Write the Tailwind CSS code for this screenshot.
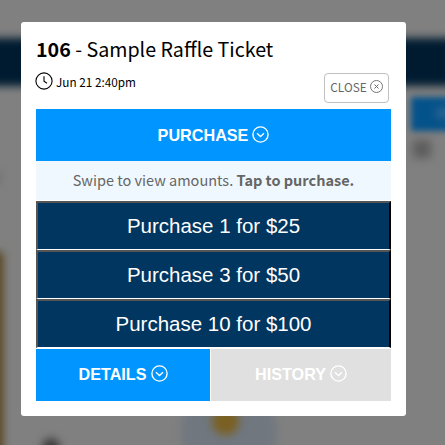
<!DOCTYPE html>
<html lang="en">
<head>
  <meta charset="UTF-8">
  <title>Sample Raffle Ticket</title>
  <script src="https://cdn.jsdelivr.net/npm/@tailwindcss/browser@4"></script>
</head>
<body class="relative w-[445px] h-[445px] overflow-hidden bg-[#808080] font-['Noto_Sans_CJK_SC','Noto_Sans',sans-serif] text-black">

  <!-- Blurred page behind the modal -->
  <div class="absolute inset-0 overflow-hidden">
    <div class="absolute -left-5 top-[38px] w-[490px] h-[48px] bg-[#001b30] blur-[4px]"></div>
    <div class="absolute left-[411px] top-[97px] w-[60px] h-[34px] bg-[#04528a] blur-[3px]"></div>
    <div class="absolute left-[436px] top-[108px] w-[20px] h-[10px] bg-[#2d6690] blur-[4px]"></div>
    <div class="absolute left-[413px] top-[140px] w-[18px] h-[18px] bg-[#5c5c5c] blur-[5px]"></div>
    <div class="absolute -left-5 top-[252px] w-[23px] h-[220px] bg-[#56451e] blur-[4px]"></div>
    <div class="absolute -left-3 top-[172px] w-[12px] h-[12px] bg-[#6c6c6c] blur-[4px]"></div>
    <div class="absolute left-[42px] top-[438px] w-[18px] h-[20px] rounded-full bg-[#3c3c3c] blur-[4px]"></div>
    <div class="absolute left-[181px] top-[384px] w-[96px] h-[96px] rounded-full bg-[#70777f] blur-[4px]"></div>
    <div class="absolute left-[212px] top-[408px] w-[27px] h-[27px] rounded-full bg-[#7a6022] blur-[4px]"></div>
  </div>

  <div class="relative ml-[21px] mt-[22px] w-[385px] h-[394px] rounded-[3px] bg-white px-[15px] pt-[14px]">
    <div class="h-[73px] flex justify-between">
      <div>
        <h1 class="text-[19.67px] leading-[26px] whitespace-nowrap"><b>106</b> - Sample Raffle Ticket</h1>
        <div class="mt-[10px] -ml-px flex items-center gap-[3px] text-[11.75px] leading-[20px]">
          <svg class="size-[18px] -mt-[3px]" viewBox="0 0 18 18" fill="none" stroke="currentColor" stroke-width="1.1">
            <circle cx="9" cy="9" r="8.1"/>
            <path d="M9 4.3v5l3 2"/>
          </svg>
          <span class="whitespace-nowrap">Jun 21 2:40pm</span>
        </div>
      </div>
      <button class="mt-[37px] mr-[2px] w-[65px] h-[30px] shrink-0 rounded-[4px] border border-[#c0c0c0] flex items-center justify-center gap-[3px] text-[11.8px] text-[#666] whitespace-nowrap">
        <span class="-mt-[2px]">CLOSE</span>
        <svg class="size-[13px] -mt-[3px]" viewBox="0 0 13 13" fill="none" stroke="currentColor">
          <circle cx="6.5" cy="6.5" r="6" stroke-width=".9"/>
          <path d="M4.5 4.5l4 4M8.5 4.5l-4 4" stroke-width="1"/>
        </svg>
      </button>
    </div>

    <button class="w-full h-[52px] bg-[#0095ff] flex items-center justify-center gap-[4px] font-['Liberation_Sans',sans-serif] font-bold text-[16.2px] text-white">
      <span class="mt-px">PURCHASE</span>
      <svg class="size-[17px] -mt-px" viewBox="0 0 17 17" fill="none" stroke="currentColor" stroke-width="1.4">
        <circle cx="8.5" cy="8.5" r="7.6"/>
        <path d="M5 7.2l3.5 3.3L12 7.2"/>
      </svg>
    </button>

    <p class="h-[39px] mb-px bg-[#f0f8ff] text-center text-[14.5px] leading-[38px] text-[#666] whitespace-nowrap">Swipe to view amounts. <b>Tap to purchase.</b></p>

    <div class="font-['Liberation_Sans',sans-serif] text-[20.5px] text-white">
      <button class="block w-full h-[49px] bg-[#003660] border-2 border-b border-t-[#555] border-l-[#555] border-r-black border-b-white">Purchase 1 for $25</button>
      <button class="block w-full h-[49px] bg-[#003660] border-2 border-b border-t-[#555] border-l-[#555] border-r-black border-b-white">Purchase 3 for $50</button>
      <button class="block w-full h-[49px] bg-[#003660] border-2 border-b border-t-[#555] border-l-[#555] border-r-black border-b-white">Purchase 10 for $100</button>
    </div>

    <div class="mt-px flex gap-px font-['Liberation_Sans',sans-serif] font-bold text-[16.2px] text-white">
      <button class="w-[174px] h-[52px] bg-[#0095ff] flex items-center justify-center gap-[4px]">
        <span class="-mt-px">DETAILS</span>
        <svg class="size-[17px] -mt-[3px]" viewBox="0 0 17 17" fill="none" stroke="currentColor" stroke-width="1.4">
          <circle cx="8.5" cy="8.5" r="7.6"/>
          <path d="M5 7.2l3.5 3.3L12 7.2"/>
        </svg>
      </button>
      <button class="w-[180px] h-[52px] bg-[#e0e0e0] flex items-center justify-center gap-[4px]">
        <span class="-mt-px">HISTORY</span>
        <svg class="size-[17px] -mt-[3px]" viewBox="0 0 17 17" fill="none" stroke="currentColor" stroke-width="1.4">
          <circle cx="8.5" cy="8.5" r="7.6"/>
          <path d="M5 7.2l3.5 3.3L12 7.2"/>
        </svg>
      </button>
    </div>
  </div>
</body>
</html>
